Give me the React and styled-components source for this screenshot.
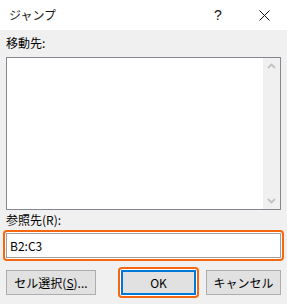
import React from "react";
import styled, { createGlobalStyle } from "styled-components";

const GlobalStyle = createGlobalStyle`
  html, body {
    margin: 0;
    padding: 0;
    background: #f0f0f0;
  }
  body {
    font-family: "Noto Sans CJK JP", "Noto Sans", sans-serif;
    font-size: 12px;
    color: #000;
  }
`;

const Dialog = styled.div`
  width: 287px;
  height: 304px;
  background: #f0f0f0;
  display: flex;
  flex-direction: column;
  overflow: hidden;
`;

const TitleBar = styled.div`
  height: 30px;
  background: #fff;
  display: flex;
  align-items: center;
  padding-left: 9px;
`;

const Title = styled.span`
  flex: 1;
  font-size: 12px;
  line-height: 16px;
  color: #1a1a1a;
`;

const CaptionButton = styled.div`
  width: 46px;
  height: 30px;
  display: flex;
  align-items: center;
  justify-content: center;
  font-family: "Liberation Sans", Arial, sans-serif;
  font-size: 14px;
  color: #111;
`;

const Body = styled.div`
  flex: 1;
  display: flex;
  flex-direction: column;
  padding: 0 6px;
`;

const Label = styled.div`
  height: ${(p) => p.$h}px;
  display: flex;
  align-items: flex-end;
  padding-bottom: ${(p) => p.$pb}px;
  box-sizing: border-box;
  font-size: 12px;
  line-height: 16px;
`;

const ListBox = styled.div`
  height: 153px;
  box-sizing: border-box;
  border: 1px solid #828790;
  background: #fff;
  display: flex;
  justify-content: flex-end;
`;

const ScrollBar = styled.div`
  width: 17px;
  background: #f0f0f0;
  display: flex;
  flex-direction: column;
  justify-content: space-between;
  align-items: center;
  padding: 5px 0;
`;

const FocusRing = styled.div`
  border: 2px solid #f6680f;
  border-radius: 4px;
  padding: 1px;
  background: #fff;
  margin: ${(p) => p.$m || "0"};
`;

const Input = styled.div`
  height: 25px;
  box-sizing: border-box;
  border: 1px solid #a0a0a0;
  background: #fff;
  padding-left: 3px;
  display: flex;
  align-items: center;
  font-size: 12px;
`;

const ButtonRow = styled.div`
  margin-top: 5px;
  height: 33px;
  display: flex;
  align-items: center;
`;

const Button = styled.div`
  width: ${(p) => p.$w}px;
  height: ${(p) => (p.$default ? 25 : 25)}px;
  box-sizing: border-box;
  border: ${(p) => (p.$default ? "2px solid #0078d7" : "1px solid #adadad")};
  background: #e1e1e1;
  display: flex;
  align-items: center;
  justify-content: center;
  font-size: 12px;
  line-height: 16px;
`;

const Spacer = styled.div`
  flex: 1;
`;

const U = styled.span`
  text-decoration: underline;
`;

const Chevron = ({ up }) => (
  <svg width="9" height="6" viewBox="0 0 9 6">
    <path
      d={up ? "M1 5 L4.5 1.5 L8 5" : "M1 1 L4.5 4.5 L8 1"}
      fill="none"
      stroke="#c2c2c2"
      strokeWidth="1.8"
    />
  </svg>
);

export default function App() {
  return (
    <>
      <GlobalStyle />
      <Dialog>
        <TitleBar>
          <Title>ジャンプ</Title>
          <CaptionButton>?</CaptionButton>
          <CaptionButton>
            <svg width="11" height="11" viewBox="0 0 11 11">
              <path d="M0.5 0.5 L10.5 10.5 M10.5 0.5 L0.5 10.5" stroke="#111" strokeWidth="1" />
            </svg>
          </CaptionButton>
        </TitleBar>
        <Body>
          <Label $h={27} $pb={6}>移動先:</Label>
          <ListBox>
            <ScrollBar>
              <Chevron up />
              <Chevron />
            </ScrollBar>
          </ListBox>
          <Label $h={20} $pb={2}>参照先(R):</Label>
          <FocusRing $m="0 -3px">
            <Input>B2:C3</Input>
          </FocusRing>
          <ButtonRow>
            <Button $w={90}>
              セル選択(<U>S</U>)...
            </Button>
            <Spacer />
            <FocusRing $m="0 7px 0 0">
              <Button $w={75} $default>OK</Button>
            </FocusRing>
            <Button $w={75}>キャンセル</Button>
          </ButtonRow>
        </Body>
      </Dialog>
    </>
  );
}
